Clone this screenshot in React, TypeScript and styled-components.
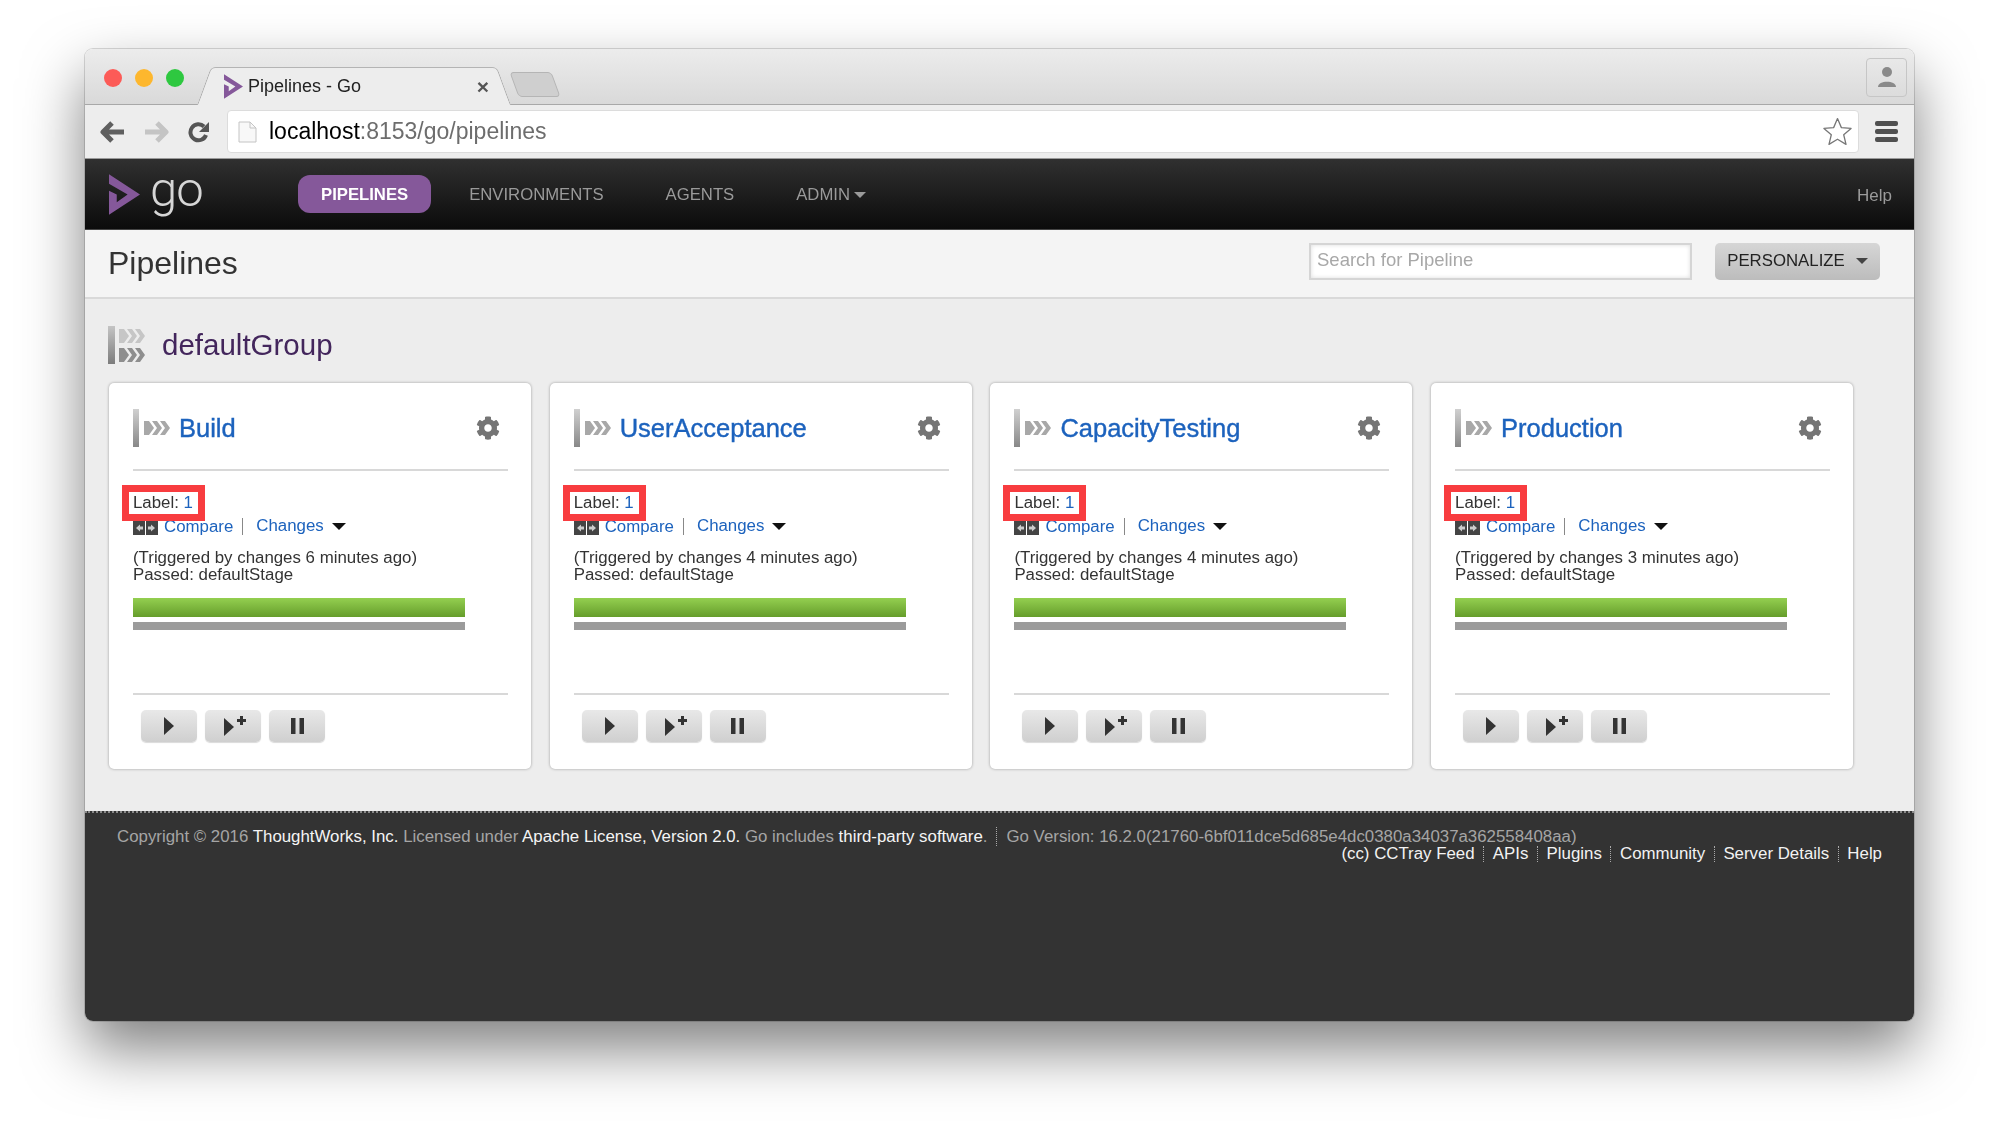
import React from 'react';
import styled, { createGlobalStyle } from 'styled-components';
import { FaCog } from 'react-icons/fa';

const GlobalStyle = createGlobalStyle`
  html, body {
    margin: 0;
    height: 100%;
    background: #fff;
    overflow: hidden;
  }
  body {
    font-family: "Liberation Sans", Arial, sans-serif;
  }
`;

const Page = styled.div`
  padding: 49px 0 0 85px;
`;

const Outer = styled.div`
  border-radius: 8px;
  width: 1829px;
  box-shadow: 0 28px 60px rgba(0, 0, 0, 0.5);
`;

const Window = styled.div`
  height: 972px;
  display: flex;
  flex-direction: column;
  border-radius: 8px;
  overflow: hidden;
  box-shadow: 0 0 0 1px rgba(0, 0, 0, 0.14);
  filter: blur(0.45px);
`;

const TabStrip = styled.div`
  height: 55px;
  flex: none;
  display: flex;
  align-items: flex-end;
  background: linear-gradient(#ececec, #d9d9d9);
  border-bottom: 1px solid #a8a8a8;
  padding-left: 19px;
  position: relative;
`;

const Lights = styled.div`
  display: flex;
  gap: 13px;
  align-self: flex-start;
  margin-top: 20px;
`;

const Light = styled.span<{ $color: string }>`
  width: 18px;
  height: 18px;
  border-radius: 50%;
  background: ${p => p.$color};
`;

const Tab = styled.div`
  position: relative;
  margin-left: 32px;
  margin-bottom: -1px;
  width: 276px;
  height: 38px;
  display: flex;
  align-items: center;
  background: #ededed;
  font-size: 18px;
  color: #222;
  z-index: 1;
  &::before,
  &::after {
    content: '';
    position: absolute;
    top: 0;
    bottom: 0;
    width: 24px;
    background: #ededed;
    border-top: 1px solid #b4b4b4;
  }
  &::before {
    left: -12px;
    transform: skewX(-20deg);
    border-left: 1px solid #a8a8a8;
    border-radius: 5px 0 0 0;
  }
  &::after {
    right: -12px;
    transform: skewX(20deg);
    border-right: 1px solid #a8a8a8;
    border-radius: 0 5px 0 0;
  }
`;

const TabInner = styled.div`
  position: relative;
  z-index: 1;
  display: flex;
  align-items: center;
  width: 100%;
  border-top: 1px solid #b4b4b4;
  height: 100%;
  box-sizing: border-box;
  padding: 0 3px 0 8px;
`;

const TabTitle = styled.span`
  margin-left: 5px;
  flex: 1;
`;

const TabClose = styled.span`
  font-size: 21px;
  color: #555;
  font-weight: bold;
  line-height: 1;
`;

const NewTab = styled.div`
  width: 40px;
  height: 23px;
  margin: 0 0 7px 22px;
  background: #cfcfcf;
  border: 1px solid #b5b5b5;
  border-radius: 4px;
  transform: skewX(20deg);
`;

const Avatar = styled.div`
  position: absolute;
  right: 7px;
  top: 9px;
  width: 41px;
  height: 39px;
  box-sizing: border-box;
  border: 1px solid #c6c6c6;
  border-radius: 4px;
  display: flex;
  align-items: center;
  justify-content: center;
`;

const Toolbar = styled.div`
  height: 54px;
  flex: none;
  box-sizing: border-box;
  display: flex;
  align-items: center;
  background: #ededed;
  padding: 0 16px 0 15px;
  border-bottom: 1px solid #9a9a9a;
`;

const ToolIcons = styled.div`
  display: flex;
  align-items: center;
  gap: 17px;
  width: 127px;
  flex: none;
`;

const ReloadSlot = styled.span`
  display: flex;
  margin-left: 2px;
`;

const AddressBar = styled.div`
  flex: 1;
  height: 41px;
  background: #fff;
  border: 1px solid #dcdcdc;
  border-radius: 4px;
  display: flex;
  align-items: center;
  padding: 0 5px 0 10px;
  font-size: 23px;
`;

const Url = styled.span`
  margin-left: 12px;
  flex: 1;
  color: #000;
`;

const UrlRest = styled.span`
  color: #6d6d6d;
`;

const MenuLines = styled.div`
  margin-left: 16px;
  width: 23px;
  display: flex;
  flex-direction: column;
  gap: 3px;
`;

const MenuLine = styled.span`
  height: 5px;
  border-radius: 2px;
  background: #505050;
`;

const NavBar = styled.div`
  height: 71px;
  flex: none;
  box-sizing: border-box;
  display: flex;
  align-items: center;
  background: linear-gradient(#303030, #0b0b0b);
  padding: 0 22px 0 24px;
  border-bottom: 1px solid #444;
`;

const Logo = styled.div`
  display: flex;
  align-items: center;
  width: 189px;
  flex: none;
`;

const LogoText = styled.span`
  font-family: Roboto, sans-serif;
  font-weight: 300;
  font-size: 49px;
  line-height: 1;
  color: #d6d6d6;
  margin: -10px 0 0 10px;
  letter-spacing: -1px;
`;

const NavItem = styled.a<{ $active?: boolean }>`
  font-size: 16.7px;
  height: 38px;
  box-sizing: border-box;
  display: flex;
  align-items: center;
  padding: 2px ${p => (p.$active ? '23px' : '31px')} 0;
  margin-right: ${p => (p.$active ? '7px' : '0')};
  color: ${p => (p.$active ? '#fff' : '#9a9a9a')};
  font-weight: ${p => (p.$active ? 'bold' : 'normal')};
  background: ${p => (p.$active ? '#85589a' : 'none')};
  border-radius: ${p => (p.$active ? '12px' : '0')};
`;

const NavHelp = styled.a`
  margin-left: auto;
  padding-top: 4px;
  font-size: 17px;
  color: #9a9a9a;
`;

const TitleBar = styled.div`
  height: 69px;
  flex: none;
  box-sizing: border-box;
  background: #f4f4f4;
  border-bottom: 2px solid #d9d9d9;
  display: flex;
  align-items: center;
  padding: 0 34px 0 23px;
`;

const PageTitle = styled.h1`
  margin: 0;
  font-size: 32px;
  font-weight: normal;
  color: #333;
  flex: 1;
`;

const SearchBox = styled.div`
  width: 383px;
  height: 37px;
  box-sizing: border-box;
  background: #fff;
  border: 2px solid #d5d5d5;
  box-shadow: inset 0 0 4px #ddd;
  display: flex;
  align-items: center;
  padding: 0 0 3px 6px;
  font-size: 18.5px;
  color: #a8a8a8;
  margin-top: -4px;
`;

const PersonalizeButton = styled.div`
  margin-left: 23px;
  width: 165px;
  height: 37px;
  box-sizing: border-box;
  border-radius: 5px;
  background: linear-gradient(#d6d6d6, #bcbcbc);
  display: flex;
  align-items: center;
  justify-content: center;
  padding-bottom: 2px;
  font-size: 16.8px;
  color: #222;
  margin-top: -4px;
`;

const DownCaret = styled.span<{ $color: string; $size: number; $gap: number }>`
  width: 0;
  height: 0;
  margin-left: ${p => p.$gap}px;
  border-style: solid;
  border-width: ${p => p.$size}px ${p => p.$size}px 0 ${p => p.$size}px;
  border-color: ${p => p.$color} transparent transparent transparent;
`;

const Content = styled.div`
  height: 512px;
  flex: none;
  box-sizing: border-box;
  background: #ededed;
  padding: 26px 0 0 24px;
`;

const GroupHeading = styled.div`
  display: flex;
  align-items: center;
  height: 40px;
  gap: 16px;
  margin-left: -1px;
`;

const GroupName = styled.span`
  font-size: 29.5px;
  color: #43265c;
`;

const Cards = styled.div`
  display: flex;
  gap: 18.7px;
  margin-top: 18px;
`;

const Card = styled.div`
  width: 422px;
  height: 386px;
  box-sizing: border-box;
  background: #fff;
  border-radius: 5px;
  box-shadow: 0 0 3px rgba(0, 0, 0, 0.35);
  padding: 0 23px 0 24px;
  display: flex;
  flex-direction: column;
  font-size: 16.85px;
  color: #333;
`;

const CardHeader = styled.div`
  height: 88px;
  flex: none;
  box-sizing: border-box;
  border-bottom: 2px solid #d8d8d8;
  display: flex;
  align-items: center;
  gap: 8px;
  padding: 4px 8px 0 0;
`;

const CardTitle = styled.a`
  flex: 1;
  font-size: 25.5px;
  color: #1c62bd;
  -webkit-text-stroke: 0.4px #1c62bd;
`;

const Gear = styled(FaCog)`
  color: #757575;
  width: 24px;
  height: 24px;
`;

const LabelRow = styled.div`
  position: relative;
  margin-top: 23px;
  height: 18px;
  line-height: 18px;
`;

const RedBox = styled.span`
  position: absolute;
  left: -11px;
  top: -9px;
  width: 83px;
  height: 36px;
  box-sizing: border-box;
  border: 7px solid #f83c3f;
`;

const BlueLink = styled.a`
  color: #1c62bd;
`;

const LinksRow = styled.div`
  display: flex;
  align-items: center;
  height: 18px;
  margin-top: 5px;
`;

const CompareLink = styled(BlueLink)`
  margin-left: 6px;
  padding-right: 9px;
  border-right: 1px solid #888;
  line-height: 17px;
  margin-right: 13px;
`;

const Info = styled.div`
  margin-top: 14px;
  line-height: 17px;
`;

const ProgressBar = styled.div`
  width: 332px;
  height: 19px;
  margin-top: 15px;
  background: linear-gradient(#94cf50, #659d2b);
`;

const ProgressBase = styled.div`
  width: 332px;
  height: 8px;
  margin-top: 5px;
  background: #9b9b9b;
`;

const CardActions = styled.div`
  margin-top: 63px;
  border-top: 2px solid #d8d8d8;
  padding: 15px 0 0 8px;
  display: flex;
  gap: 8px;
`;

const ActionButton = styled.div`
  width: 56px;
  height: 32px;
  border-radius: 5px;
  background: linear-gradient(#e8e8e8, #cfcfcf);
  box-shadow: 0 1px 1px rgba(0, 0, 0, 0.15);
  display: flex;
  align-items: center;
  justify-content: center;
`;

const Footer = styled.div`
  flex: 1;
  background: #333;
  border-top: 2px dotted #8a8a8a;
  padding: 16px 32px 0 32px;
  font-size: 16.85px;
  line-height: 16.5px;
  color: #a5a5a5;
`;

const FooterLine = styled.div`
  white-space: nowrap;
`;

const FooterLinks = styled.div`
  display: flex;
  justify-content: flex-end;
  color: #fff;
`;

const FooterLink = styled.a<{ $first?: boolean }>`
  color: #f2f2f2;
  padding: ${p => (p.$first ? '0 8.6px 0 0' : '0 8.6px')};
  border-left: ${p => (p.$first ? 'none' : '1px dotted #aaa')};
  &:last-child {
    padding-right: 0;
  }
`;

const White = styled.a`
  color: #f5f5f5;
`;

const Sep = styled.span`
  border-left: 1px dotted #aaa;
  margin: 0 9px;
`;

const Favicon: React.FC<{ width: number; height: number }> = ({ width, height }) => (
  <svg width={width} height={height} viewBox="0 0 20 26" style={{ flex: 'none' }}>
    <path d="M0 0 L20 13 L0 26 L0 10.5 L5 13 V18 L12 13 L0 6 Z" fill="#85589a" />
  </svg>
);

const Arrow: React.FC<{ color: string; flip?: boolean }> = ({ color, flip }) => (
  <svg width="26" height="22" viewBox="0 0 26 22" style={flip ? { transform: 'scaleX(-1)' } : undefined}>
    <path d="M12 2 L3 11 L12 20 M3 11 H24" fill="none" stroke={color} strokeWidth="5" strokeLinejoin="round" />
  </svg>
);

const Reload = () => (
  <svg width="22" height="22" viewBox="0 0 22 22">
    <path d="M18 14 A8 8 0 1 1 16 5.5" fill="none" stroke="#555" strokeWidth="4" />
    <path d="M21 1 V11 H11 Z" fill="#555" />
  </svg>
);

const DocIcon = () => (
  <svg width="19" height="22" viewBox="0 0 19 22" style={{ flex: 'none' }}>
    <path d="M1 1 H12 L18 7 V21 H1 Z" fill="#f8f8f8" stroke="#c4c4c4" />
    <path d="M12 1 V7 H18" fill="none" stroke="#c4c4c4" />
  </svg>
);

const Star = () => (
  <svg width="31" height="31" viewBox="0 0 24 24">
    <path
      d="M12 2 L15 9 L22.5 9.6 L16.8 14.5 L18.6 22 L12 18 L5.4 22 L7.2 14.5 L1.5 9.6 L9 9 Z"
      fill="#fff"
      stroke="#777"
      strokeLinejoin="round"
    />
  </svg>
);

const Person = () => (
  <svg width="20" height="24" viewBox="0 0 20 24">
    <circle cx="10" cy="6" r="5" fill="#8a8a8a" />
    <path d="M1 21 C1 14 19 14 19 21 Z" fill="#8a8a8a" />
  </svg>
);

const Chevrons: React.FC<{ y: number; color: string }> = ({ y, color }) => (
  <g fill={color}>
    <path d={`M0 ${y} h5 l5 7 l-5 7 h-5 Z`} />
    <path d={`M8 ${y} h5 l5 7 l-5 7 h-5 l5 -7 Z`} />
    <path d={`M16 ${y} h5 l5 7 l-5 7 h-5 l5 -7 Z`} />
  </g>
);

const PipelineIcon = () => (
  <svg width="38" height="38" viewBox="0 0 38 38" style={{ flex: 'none' }}>
    <defs>
      <linearGradient id="bar" x1="0" y1="0" x2="0" y2="1">
        <stop offset="0" stopColor="#d0d0d0" />
        <stop offset="1" stopColor="#888" />
      </linearGradient>
    </defs>
    <rect x="0" y="0" width="6" height="38" fill="url(#bar)" />
    <g transform="translate(11 12)">
      <Chevrons y={0} color="#a8a8a8" />
    </g>
  </svg>
);

const GroupIcon = () => (
  <svg width="38" height="38" viewBox="0 0 38 38" style={{ flex: 'none' }}>
    <defs>
      <linearGradient id="gbar" x1="0" y1="0" x2="0" y2="1">
        <stop offset="0" stopColor="#c4c4c4" />
        <stop offset="1" stopColor="#7c7c7c" />
      </linearGradient>
    </defs>
    <rect x="0" y="0" width="7" height="38" fill="url(#gbar)" />
    <g transform="translate(11 3)">
      <Chevrons y={0} color="#c6c6c6" />
      <Chevrons y={19} color="#8e8e8e" />
    </g>
  </svg>
);

const CompareIcon = () => (
  <svg width="25" height="14" viewBox="0 0 25 14" style={{ flex: 'none', marginTop: 3 }}>
    <rect x="0" y="0" width="12" height="14" fill="#444" />
    <rect x="13" y="0" width="12" height="14" fill="#444" />
    <path d="M3 7 L7 3.5 V10.5 Z M7 5.5 h3 v3 h-3 Z" fill="#ccc" />
    <path d="M22 7 L18 3.5 V10.5 Z M15 5.5 h3 v3 h-3 Z" fill="#ccc" />
  </svg>
);

const PlayIcon = () => (
  <svg width="10" height="18" viewBox="0 0 10 18">
    <path d="M0 0 L10 9 L0 18 Z" fill="#333" />
  </svg>
);

const PlusPlayIcon = () => (
  <svg width="26" height="20" viewBox="0 0 26 20" style={{ marginLeft: 4 }}>
    <path d="M2 2 L12 11 L2 20 Z" fill="#333" />
    <path d="M18 0 h3 v3 h3 v3 h-3 v3 h-3 v-3 h-3 v-3 h3 Z" fill="#333" />
  </svg>
);

const PauseIcon = () => (
  <svg width="13" height="16" viewBox="0 0 13 16">
    <rect x="0" y="0" width="4.5" height="16" fill="#333" />
    <rect x="8.5" y="0" width="4.5" height="16" fill="#333" />
  </svg>
);

const pipelines = [
  { name: 'Build', ago: 6 },
  { name: 'UserAcceptance', ago: 4 },
  { name: 'CapacityTesting', ago: 4 },
  { name: 'Production', ago: 3 },
];

const footerLinks = ['(cc) CCTray Feed', 'APIs', 'Plugins', 'Community', 'Server Details', 'Help'];

const App: React.FC = () => (
  <Page>
    <GlobalStyle />
    <Outer>
      <Window>
        <TabStrip>
          <Lights>
            <Light $color="#fc5b57" />
            <Light $color="#fdb72e" />
            <Light $color="#2ec840" />
          </Lights>
          <Tab>
            <TabInner>
              <Favicon width={19} height={25} />
              <TabTitle>Pipelines - Go</TabTitle>
              <TabClose>×</TabClose>
            </TabInner>
          </Tab>
          <NewTab />
          <Avatar>
            <Person />
          </Avatar>
        </TabStrip>
        <Toolbar>
          <ToolIcons>
            <Arrow color="#5f5f5f" />
            <Arrow color="#c4c4c4" flip />
            <ReloadSlot>
              <Reload />
            </ReloadSlot>
          </ToolIcons>
          <AddressBar>
            <DocIcon />
            <Url>
              localhost<UrlRest>:8153/go/pipelines</UrlRest>
            </Url>
            <Star />
          </AddressBar>
          <MenuLines>
            <MenuLine />
            <MenuLine />
            <MenuLine />
          </MenuLines>
        </Toolbar>
        <NavBar>
          <Logo>
            <Favicon width={31} height={41} />
            <LogoText>go</LogoText>
          </Logo>
          <NavItem $active>PIPELINES</NavItem>
          <NavItem>ENVIRONMENTS</NavItem>
          <NavItem>AGENTS</NavItem>
          <NavItem>
            ADMIN
            <DownCaret $color="#9a9a9a" $size={6} $gap={4} />
          </NavItem>
          <NavHelp>Help</NavHelp>
        </NavBar>
        <TitleBar>
          <PageTitle>Pipelines</PageTitle>
          <SearchBox>Search for Pipeline</SearchBox>
          <PersonalizeButton>
            PERSONALIZE
            <DownCaret $color="#444" $size={6} $gap={11} />
          </PersonalizeButton>
        </TitleBar>
        <Content>
          <GroupHeading>
            <GroupIcon />
            <GroupName>defaultGroup</GroupName>
          </GroupHeading>
          <Cards>
            {pipelines.map(p => (
              <Card key={p.name}>
                <CardHeader>
                  <PipelineIcon />
                  <CardTitle>{p.name}</CardTitle>
                  <Gear />
                </CardHeader>
                <LabelRow>
                  <RedBox />
                  Label: <BlueLink>1</BlueLink>
                </LabelRow>
                <LinksRow>
                  <CompareIcon />
                  <CompareLink>Compare</CompareLink>
                  <BlueLink>Changes</BlueLink>
                  <DownCaret $color="#111" $size={7} $gap={8} />
                </LinksRow>
                <Info>
                  (Triggered by changes {p.ago} minutes ago)
                  <br />
                  Passed: defaultStage
                </Info>
                <ProgressBar />
                <ProgressBase />
                <CardActions>
                  <ActionButton>
                    <PlayIcon />
                  </ActionButton>
                  <ActionButton>
                    <PlusPlayIcon />
                  </ActionButton>
                  <ActionButton>
                    <PauseIcon />
                  </ActionButton>
                </CardActions>
              </Card>
            ))}
          </Cards>
        </Content>
        <Footer>
          <FooterLine>
            Copyright © 2016 <White>ThoughtWorks, Inc.</White> Licensed under{' '}
            <White>Apache License, Version 2.0.</White> Go includes <White>third-party software</White>.
            <Sep />
            Go Version: 16.2.0(21760-6bf011dce5d685e4dc0380a34037a362558408aa)
          </FooterLine>
          <FooterLinks>
            {footerLinks.map((l, i) => (
              <FooterLink key={l} $first={i === 0}>
                {l}
              </FooterLink>
            ))}
          </FooterLinks>
        </Footer>
      </Window>
    </Outer>
  </Page>
);

export default App;
